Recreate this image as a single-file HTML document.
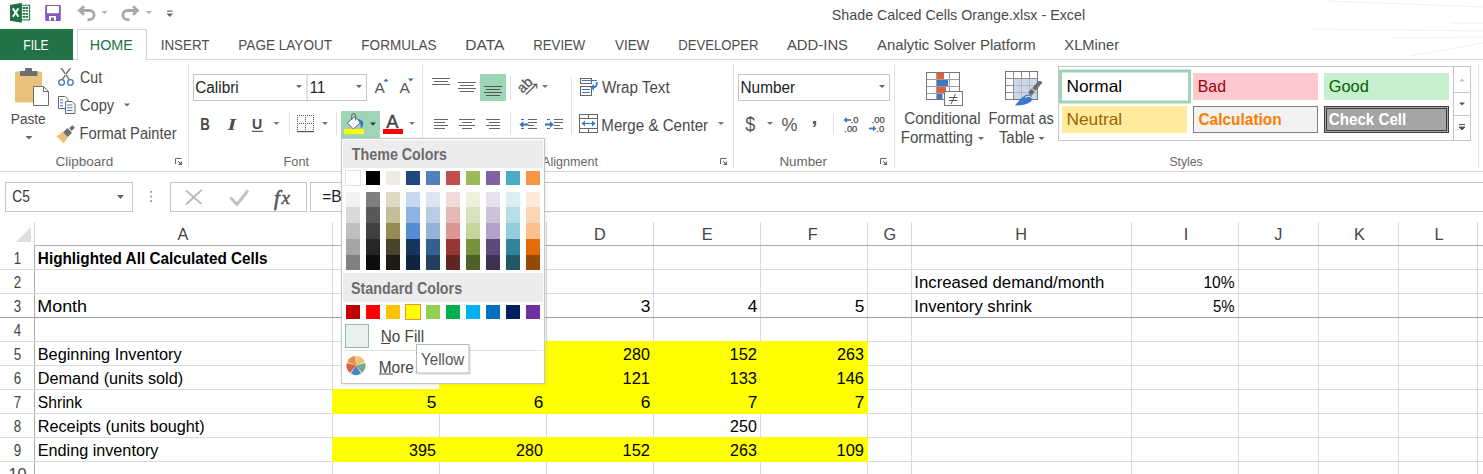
<!DOCTYPE html><html><head><meta charset="utf-8"><style>html,body{margin:0;padding:0;background:#fff;width:1483px;height:474px;overflow:hidden}svg{display:block;font-family:"Liberation Sans",sans-serif}text{font-family:"Liberation Sans",sans-serif}</style></head><body><svg width="1483" height="474" viewBox="0 0 1483 474" font-family="Liberation Sans, sans-serif">
<rect width="1483" height="474" fill="#fff"/>
<g stroke="#f0f0f0" stroke-width="1.2" fill="none"><path d="M1327 1 L1483 7"/><path d="M1313 29 L1483 31"/><path d="M1392 38 L1483 37"/><path d="M1410 56 L1483 43"/><path d="M1450 23 L1483 23"/></g>
<g><rect x="21" y="5.3" width="8.6" height="14.6" fill="#fff" stroke="#1e7145" stroke-width="1"/><path d="M22.6 7h2.4v1.9h-2.4zM25.5 7h2.6v1.9h-2.6zM22.6 10h2.4v1.6h-2.4zM25.5 10h2.6v1.6h-2.6zM22.6 13h2.4v1.8h-2.4zM25.5 13h2.6v1.8h-2.6zM22.6 16h2.4v1.7h-2.4zM25.5 16h2.6v1.7h-2.6z" fill="#1e7145"/><path d="M10 5 L21.8 2.7 L21.8 22.7 L10 20.7 Z" fill="#1e7145"/><path d="M12.8 8.4 L18.5 16.8 M18.4 8.4 L12.8 16.8" stroke="#fff" stroke-width="1.9"/></g>
<g><rect x="45.2" y="5" width="15.6" height="16" rx="1" fill="#8558c0"/><rect x="47" y="6" width="12" height="7.3" rx="0.8" fill="#fff"/><path d="M49 20.5 V16 H56 V20.5 H54 V17.5 H51 V20.5 Z" fill="#fff"/></g>
<g fill="none" stroke="#a8a8a8" stroke-width="2.8"><path d="M80 10.5 H89.5 A4.6 4.6 0 0 1 89.5 19.7 H87.5"/><path d="M84 6.3 L79.5 10.5 L84 14.7"/><path d="M137 10.5 H127.5 A4.6 4.6 0 0 0 127.5 19.7 H129.5"/><path d="M133 6.3 L137.5 10.5 L133 14.7"/></g><path d="M101.5 11h6l-3 3z" fill="#b0b0b0"/><path d="M146 11h6l-3 3z" fill="#b0b0b0"/><rect x="167" y="10.5" width="5.5" height="1.2" fill="#666"/><path d="M166.5 13.5h6.5l-3.25 3.5z" fill="#666"/>
<rect x="0" y="59" width="1483" height="1" fill="#d5d5d5"/>
<rect x="0" y="29" width="73" height="31" fill="#217346"/>
<rect x="77" y="29" width="70" height="31" fill="#ffffff"/>
<path d="M77.5 60 V29.5 H146.5 V60" fill="none" stroke="#d5d5d5" stroke-width="1"/>
<rect x="0" y="171" width="1483" height="1" fill="#d5d5d5"/>
<rect x="188" y="64" width="1" height="104" fill="#e1e1e1"/>
<rect x="422" y="64" width="1" height="104" fill="#e1e1e1"/>
<rect x="733" y="64" width="1" height="104" fill="#e1e1e1"/>
<rect x="894" y="64" width="1" height="104" fill="#e1e1e1"/>
<rect x="1478" y="64" width="1" height="104" fill="#e1e1e1"/>
<path d="M175.5 164 V158.5 H181.5" fill="none" stroke="#666" stroke-width="1"/><path d="M182 161 V165 H178 Z" fill="#666"/><path d="M178 161 L180.5 163.5" stroke="#666" stroke-width="1"/>
<path d="M720.5 164 V158.5 H726.5" fill="none" stroke="#666" stroke-width="1"/><path d="M727 161 V165 H723 Z" fill="#666"/><path d="M723 161 L725.5 163.5" stroke="#666" stroke-width="1"/>
<path d="M880.5 164 V158.5 H886.5" fill="none" stroke="#666" stroke-width="1"/><path d="M887 161 V165 H883 Z" fill="#666"/><path d="M883 161 L885.5 163.5" stroke="#666" stroke-width="1"/>
<g><rect x="15" y="71.5" width="27" height="31" rx="1.5" fill="#e8c27b"/><rect x="20" y="71" width="17.5" height="5" rx="1" fill="#6d6d6d"/><rect x="25" y="68" width="7" height="4" rx="1" fill="#6d6d6d"/><path d="M33.5 86.5 H43.5 L48.5 91.5 V105.5 H33.5 Z" fill="#fff" stroke="#6d6d6d" stroke-width="1"/><path d="M43.5 86.5 V91.5 H48.5" fill="none" stroke="#6d6d6d" stroke-width="1"/></g><path d="M25.5 136h7l-3.5 3.5z" fill="#666"/>
<g><path d="M60.3 68 L62.2 68.3 L69.6 79 L68.4 79.4 Z M71.2 68 L69.3 68.3 L61.9 79 L63.1 79.4 Z" fill="#666"/><circle cx="61.6" cy="82.4" r="2.8" fill="none" stroke="#3c78c3" stroke-width="1.3"/><circle cx="70.4" cy="82.4" r="2.8" fill="none" stroke="#3c78c3" stroke-width="1.3"/></g>
<g fill="#fff" stroke="#666" stroke-width="1"><path d="M58.5 96.5 h6.5 l3 3 v9 h-9.5 z"/><path d="M65.5 101.5 h6.5 l3 3 v9 h-9.5 z"/></g><path d="M60 100h3M60 102.8h3M60 105.7h3M67 105h5.5M67 107.8h5.5M67 110.5h5.5" stroke="#3c78c3" stroke-width="1"/><path d="M124 103.5h6l-3 3z" fill="#666"/>
<g transform="translate(66.5 133.5) rotate(-45)"><path d="M-9 -5 L-1.5 -3.8 L-1.5 3.8 L-9 5 Z" fill="#e8c27b"/><rect x="-1.5" y="-3.3" width="6" height="6.6" fill="#6d6d6d"/><rect x="5.5" y="-1.8" width="4.5" height="3.6" fill="#6d6d6d"/></g>
<rect x="193.5" y="74.5" width="173" height="26" fill="#fff" stroke="#c6c6c6"/><path d="M307 75 V100" stroke="#c6c6c6"/><path d="M296 85h6l-3 3z M356 85h6l-3 3z" fill="#666"/>
<g font-family="Liberation Sans" fill="#555"><text x="374.5" y="93.3" font-size="15.5">A</text><text x="399.5" y="93.3" font-size="15.5">A</text></g><path d="M383.5 81.5 l2.5 -3 l2.5 3z" fill="#2f6eb8"/><path d="M408 78.5 h5.5 l-2.75 3z" fill="#2f6eb8"/>
<g fill="#4a4a4a"><text x="200.3" y="129.9" font-size="17.2" font-weight="700" textLength="9.6" lengthAdjust="spacingAndGlyphs">B</text><text x="227.5" y="129.9" font-size="16.6" font-weight="700" font-style="italic" style="font-family:'Liberation Serif'" textLength="8.8" lengthAdjust="spacingAndGlyphs">I</text><text x="252" y="128.6" font-size="15.2" font-weight="700" textLength="10.2" lengthAdjust="spacingAndGlyphs">U</text></g><rect x="252" y="130.8" width="11" height="1.1" fill="#4a4a4a"/><path d="M273.5 122h6l-3 3z" fill="#777"/><path d="M289.5 112v23 M336.5 112v23" stroke="#e1e1e1"/>
<path d="M297 115h1v1h-1zM297 117h1v1h-1zM297 119h1v1h-1zM297 121h1v1h-1zM297 123h1v1h-1zM297 125h1v1h-1zM297 127h1v1h-1zM297 129h1v1h-1zM299 115h1v1h-1zM299 123h1v1h-1zM301 115h1v1h-1zM301 123h1v1h-1zM303 115h1v1h-1zM303 123h1v1h-1zM305 115h1v1h-1zM305 117h1v1h-1zM305 119h1v1h-1zM305 121h1v1h-1zM305 123h1v1h-1zM305 125h1v1h-1zM305 127h1v1h-1zM305 129h1v1h-1zM307 115h1v1h-1zM307 123h1v1h-1zM309 115h1v1h-1zM309 123h1v1h-1zM311 115h1v1h-1zM311 123h1v1h-1zM313 115h1v1h-1zM313 117h1v1h-1zM313 119h1v1h-1zM313 121h1v1h-1zM313 123h1v1h-1zM313 125h1v1h-1zM313 127h1v1h-1zM313 129h1v1h-1z" fill="#5a5a5a"/>
<rect x="297" y="131" width="17" height="1.2" fill="#555"/><path d="M322 122h6l-3 3z" fill="#777"/>
<rect x="341" y="111" width="39" height="27" fill="#9fd5b7"/>
<g><path d="M347.3 123 L354.8 116.6 L360.5 122.6 L353.4 129 Z" fill="#fff" stroke="#555" stroke-width="0.9"/><path d="M351.7 119.8 V115.5 a1.9 1.9 0 0 1 3.8 0 V120.5" fill="none" stroke="#555" stroke-width="0.9"/><path d="M357.8 119 Q363.8 119.8 363.3 124.3 Q363 127.3 360.6 128.6 Q361.2 124 358.6 121.3 Z" fill="#3c78c3"/></g>
<rect x="344" y="129" width="20" height="5" fill="#ffff00"/>
<path d="M370 122.5h6l-3 3z" fill="#333"/>
<text x="386.3" y="127.8" font-size="18.3" fill="#444" stroke="#444" stroke-width="0.45">A</text>
<rect x="383" y="129" width="20" height="5" fill="#ff0000"/>
<path d="M409 122h6l-3 3z" fill="#777"/>
<path d="M432 78.5h18M434 81.5h14M432 84.5h18" stroke="#666"/>
<path d="M458 82.5h18M460 85.5h14M458 88.5h18M460 91.5h14" stroke="#666"/>
<rect x="480" y="74" width="26" height="27" fill="#9fd5b7"/>
<path d="M484 86.5h18M486 89.5h14M484 92.5h18M486 95.5h14" stroke="#555"/>
<rect x="510" y="76" width="1" height="24" fill="#e1e1e1"/>
<g transform="translate(525.6 85.6) rotate(-45)"><text x="-8" y="3.5" font-size="14" fill="#555" stroke="#555" stroke-width="0.3" textLength="15.5" lengthAdjust="spacingAndGlyphs">ab</text></g><path d="M526 94.5 L536.5 84 M532.5 84.2 h4.3 v4.3" fill="none" stroke="#555" stroke-width="1.1"/><path d="M542 85h6l-3 3z" fill="#777"/>
<rect x="571" y="77" width="1" height="57" fill="#e1e1e1"/>
<path d="M434 119.5h14M434 122.5h11M434 125.5h14M434 128.5h11" stroke="#666"/>
<path d="M459 119.5h16M462 122.5h10M459 125.5h16M462 128.5h10" stroke="#666"/>
<path d="M486 119.5h14M489 122.5h11M486 125.5h14M489 128.5h11" stroke="#666"/>
<rect x="510" y="112" width="1" height="22" fill="#e1e1e1"/>
<path d="M521 119.5h3M528 119.5h9M528 122.5h9M528 125.5h6M521 128.5h3M528 128.5h9" stroke="#666"/><path d="M522 124.5 h6.5" stroke="#3c78c3" stroke-width="2.2"/><path d="M519.3 124.5 l4 -3.3 v6.6z" fill="#3c78c3"/><path d="M547 119.5h3M554 119.5h9M554 122.5h9M554 125.5h6M547 128.5h3M554 128.5h9" stroke="#666"/><path d="M545 124.5 h6.5" stroke="#3c78c3" stroke-width="2.2"/><path d="M554 124.5 l-4 -3.3 v6.6z" fill="#3c78c3"/>
<g fill="none" stroke="#666" stroke-width="1"><rect x="580.5" y="78.5" width="11" height="5"/><rect x="580.5" y="86.5" width="11" height="9"/></g><path d="M582 80.5h15 M582 89.5h8 M582 92.5h8" stroke="#3c78c3" stroke-width="1"/><path d="M596.5 82 q1.5 5 -4 5.5" fill="none" stroke="#3c78c3" stroke-width="1.8"/><path d="M590 87.3 l4 -3.2 v6.4z" fill="#3c78c3"/>
<g fill="none" stroke="#666" stroke-width="1"><rect x="579.5" y="114.5" width="18" height="18"/><path d="M580 118.5h17 M580 128.5h17 M588.5 115v3.5 M588.5 128.5v4"/></g><path d="M583 123.5h11" stroke="#3c78c3" stroke-width="1.2"/><path d="M581.5 123.5l3.5 -3v6z M595.5 123.5l-3.5 -3v6z" fill="#3c78c3"/><path d="M718 122h6l-3 3z" fill="#777"/>
<rect x="738.5" y="74.5" width="151" height="26" fill="#fff" stroke="#c6c6c6"/><path d="M879 85h6l-3 3z" fill="#666"/>
<g fill="#555"><text x="745.2" y="130.5" font-size="19.5" textLength="10" lengthAdjust="spacingAndGlyphs">$</text><text x="781.5" y="131" font-size="19" textLength="16" lengthAdjust="spacingAndGlyphs">%</text><text x="811.5" y="124" font-size="21" font-weight="700">,</text></g><path d="M767 122h6l-3 3z" fill="#777"/><path d="M833.5 113v22" stroke="#e1e1e1"/><g font-size="9.4" fill="#4a4a4a" stroke="#4a4a4a" stroke-width="0.25"><text x="850.6" y="122.7">.0</text><text x="844.3" y="131.6">.00</text><text x="871.6" y="122.7">.00</text><text x="876.3" y="131.6">.0</text></g><path d="M851 120h-5" stroke="#3c78c3" stroke-width="1.8"/><path d="M843.5 120l3.3 -2.9v5.8z" fill="#3c78c3"/><path d="M869 128.5h5" stroke="#3c78c3" stroke-width="1.8"/><path d="M876.3 128.5l-3.3 -2.9v5.8z" fill="#3c78c3"/>
<g><rect x="926.5" y="72.5" width="33" height="27" fill="#fff" stroke="#777"/><path d="M936.5 73v26 M949.5 73v26 M927 79.5h32 M927 86.5h32 M927 93.5h32" stroke="#a0a0a0"/><rect x="937" y="73" width="7" height="6" fill="#e0623a"/><rect x="937" y="80" width="11" height="6" fill="#3c78c3"/><rect x="937" y="87" width="9" height="6" fill="#e0623a"/><rect x="937" y="94" width="5.5" height="5" fill="#3c78c3"/><rect x="944.5" y="91.5" width="18" height="14" fill="#fff" stroke="#777"/><path d="M949 97.5h8.5 M949 100.5h8.5 M955.5 94 L951 104" stroke="#444" stroke-width="0.9" fill="none"/></g><path d="M978 137h6l-3 3z" fill="#666"/>
<g><rect x="1005.5" y="71.5" width="32" height="28" fill="#fff" stroke="#777"/><rect x="1014" y="78" width="23" height="21" fill="#c5d9f1"/><path d="M1013.5 72v27 M1021.5 72v6 M1029.5 72v6 M1006 78.5h31 M1006 85.5h8 M1006 92.5h8" stroke="#909090"/><path d="M1021.5 79v20 M1029.5 79v20 M1014 85.5h23 M1014 92.5h23" stroke="#c9a88f" stroke-width="0.8"/><g transform="translate(1033 90.5) rotate(-50)"><path d="M1.3 -2.1 H10.5 L12.5 0 L12 2.1 H1.3 Z" fill="#6d6d6d"/><rect x="-5" y="-2.3" width="5.2" height="4.6" fill="#6d6d6d"/></g><path d="M1030.5 95 Q1034 98 1031 101.5 Q1026 105.5 1015 105.5 Q1019 100 1023.5 96.5 Q1027 93.5 1030.5 95 Z" fill="#3c78c3"/><path d="M1025 97.5 Q1030 94.5 1032 98.5" stroke="#fff" stroke-width="1" fill="none"/></g><path d="M1038.5 137h6l-3 3z" fill="#666"/>
<rect x="1058.5" y="66.5" width="412" height="74" fill="#fff" stroke="#c6c6c6"/><rect x="1060.5" y="71" width="129" height="31" fill="#fff" stroke="#9fd5b7" stroke-width="3"/><rect x="1193" y="73" width="125" height="27" fill="#ffc7ce"/><rect x="1324" y="73" width="125" height="27" fill="#c6efce"/><rect x="1062" y="106" width="125" height="27" fill="#ffeb9c"/><rect x="1193.5" y="106.5" width="124" height="26" fill="#f2f2f2" stroke="#7f7f7f"/><rect x="1324.5" y="106.5" width="124" height="26" fill="#a5a5a5" stroke="#3f3f3f"/><rect x="1326.5" y="108.5" width="120" height="22" fill="none" stroke="#3f3f3f"/><path d="M1453.5 67v73 M1454 92.5h16 M1454 115.5h16" stroke="#c6c6c6"/><path d="M1459 81.5h6l-3 -3z" fill="#c6c6c6"/><path d="M1459 102.5h6l-3 3z" fill="#555"/><path d="M1459 124.5h6 M1459 127h6l-3 3z" stroke="#555" fill="#555"/>
<rect x="5.5" y="182.5" width="127" height="29" fill="#fff" stroke="#c6c6c6"/><path d="M117 195h7l-3.5 4z" fill="#666"/><path d="M151.2 191v1.8 M151.2 195.8v1.8 M151.2 200.2v1.8" stroke="#8a8a8a" stroke-width="1.8"/><rect x="170.5" y="182.5" width="136" height="29" fill="#fff" stroke="#c6c6c6"/><path d="M186 190.5 L201.5 204 M201.5 190 L186 204.5" stroke="#bababa" stroke-width="1.9"/><path d="M230.5 197.5 L237 204.5 L248 190.5" fill="none" stroke="#c2c2c2" stroke-width="3"/><text x="274" y="204.5" style="font-family:'Liberation Serif'" font-style="italic" font-size="21" fill="#555" stroke="#555" stroke-width="0.6">f</text><text x="281.5" y="204" style="font-family:'Liberation Serif'" font-style="italic" font-size="19" fill="#555" stroke="#555" stroke-width="0.5">x</text><rect x="310.5" y="182.5" width="1180" height="29" fill="#fff" stroke="#c6c6c6"/>
<path d="M16 242 L31 227 L31 242z" fill="#dfdfdf"/>
<rect x="34" y="222" width="1" height="252" fill="#d9d9d9"/>
<rect x="332" y="222" width="1" height="252" fill="#d9d9d9"/>
<rect x="439" y="222" width="1" height="252" fill="#d9d9d9"/>
<rect x="546" y="222" width="1" height="252" fill="#d9d9d9"/>
<rect x="653" y="222" width="1" height="252" fill="#d9d9d9"/>
<rect x="760" y="222" width="1" height="252" fill="#d9d9d9"/>
<rect x="867" y="222" width="1" height="252" fill="#d9d9d9"/>
<rect x="911" y="222" width="1" height="252" fill="#d9d9d9"/>
<rect x="1131" y="222" width="1" height="252" fill="#d9d9d9"/>
<rect x="1238" y="222" width="1" height="252" fill="#d9d9d9"/>
<rect x="1318" y="222" width="1" height="252" fill="#d9d9d9"/>
<rect x="1398" y="222" width="1" height="252" fill="#d9d9d9"/>
<rect x="1477" y="222" width="1" height="252" fill="#d9d9d9"/>
<rect x="34" y="245" width="1" height="229" fill="#ababab"/>
<rect x="0" y="269" width="1483" height="1" fill="#d9d9d9"/>
<rect x="0" y="293" width="1483" height="1" fill="#d9d9d9"/>
<rect x="0" y="317" width="1483" height="1" fill="#d9d9d9"/>
<rect x="0" y="341" width="1483" height="1" fill="#d9d9d9"/>
<rect x="0" y="365" width="1483" height="1" fill="#d9d9d9"/>
<rect x="0" y="389" width="1483" height="1" fill="#d9d9d9"/>
<rect x="0" y="413" width="1483" height="1" fill="#d9d9d9"/>
<rect x="0" y="437" width="1483" height="1" fill="#d9d9d9"/>
<rect x="0" y="461" width="1483" height="1" fill="#d9d9d9"/>
<rect x="0" y="485" width="1483" height="1" fill="#d9d9d9"/>
<rect x="34" y="245" width="1449" height="1" fill="#ababab"/>
<rect x="0" y="317" width="1483" height="1" fill="#a0a0a0"/>
<rect x="439" y="341" width="429" height="48" fill="#ffff00"/>
<rect x="332" y="389" width="536" height="25" fill="#ffff00"/>
<rect x="332" y="437" width="536" height="25" fill="#ffff00"/>
<text x="831.79" y="20" font-size="15.41" fill="#4a4a4a" textLength="253.28" lengthAdjust="spacingAndGlyphs">Shade Calced Cells Orange.xlsx - Excel</text>
<text x="23.33" y="50" font-size="14.83" fill="#ffffff" textLength="25.26" lengthAdjust="spacingAndGlyphs">FILE</text>
<text x="89.85" y="50" font-size="14.83" fill="#217346" textLength="42.92" lengthAdjust="spacingAndGlyphs">HOME</text>
<text x="160.69" y="50" font-size="14.83" fill="#4d4d4d" textLength="48.77" lengthAdjust="spacingAndGlyphs">INSERT</text>
<text x="238.33" y="50" font-size="14.83" fill="#4d4d4d" textLength="93.73" lengthAdjust="spacingAndGlyphs">PAGE LAYOUT</text>
<text x="361.33" y="50" font-size="14.83" fill="#4d4d4d" textLength="75.25" lengthAdjust="spacingAndGlyphs">FORMULAS</text>
<text x="465.33" y="50" font-size="14.83" fill="#4d4d4d" textLength="39.12" lengthAdjust="spacingAndGlyphs">DATA</text>
<text x="533.33" y="50" font-size="14.83" fill="#4d4d4d" textLength="51.94" lengthAdjust="spacingAndGlyphs">REVIEW</text>
<text x="614.93" y="50" font-size="14.83" fill="#4d4d4d" textLength="34.41" lengthAdjust="spacingAndGlyphs">VIEW</text>
<text x="678.33" y="50" font-size="14.83" fill="#4d4d4d" textLength="80.18" lengthAdjust="spacingAndGlyphs">DEVELOPER</text>
<text x="786.93" y="50" font-size="14.83" fill="#4d4d4d" textLength="61.11" lengthAdjust="spacingAndGlyphs">ADD-INS</text>
<text x="876.93" y="50" font-size="14.83" fill="#4d4d4d" textLength="158.73" lengthAdjust="spacingAndGlyphs">Analytic Solver Platform</text>
<text x="1064.33" y="50" font-size="14.83" fill="#4d4d4d" textLength="54.73" lengthAdjust="spacingAndGlyphs">XLMiner</text>
<text x="10.85" y="123.6" font-size="14.83" fill="#4a4a4a" textLength="34.79" lengthAdjust="spacingAndGlyphs">Paste</text>
<text x="80.09" y="83" font-size="15.84" fill="#4a4a4a" textLength="22.08" lengthAdjust="spacingAndGlyphs">Cut</text>
<text x="80.09" y="111" font-size="15.84" fill="#4a4a4a" textLength="34.05" lengthAdjust="spacingAndGlyphs">Copy</text>
<text x="79.49" y="139" font-size="15.84" fill="#4a4a4a" textLength="97.16" lengthAdjust="spacingAndGlyphs">Format Painter</text>
<text x="55.52" y="166" font-size="13.23" fill="#666666" textLength="57.62" lengthAdjust="spacingAndGlyphs">Clipboard</text>
<text x="195.29" y="93" font-size="15.84" fill="#222" textLength="43.43" lengthAdjust="spacingAndGlyphs">Calibri</text>
<text x="309.81" y="93" font-size="15.84" fill="#222" textLength="15.35" lengthAdjust="spacingAndGlyphs">11</text>
<text x="283.60" y="166" font-size="13.23" fill="#666666" textLength="25.46" lengthAdjust="spacingAndGlyphs">Font</text>
<text x="601.89" y="93" font-size="15.84" fill="#4a4a4a" textLength="67.78" lengthAdjust="spacingAndGlyphs">Wrap Text</text>
<text x="601.29" y="130.5" font-size="15.84" fill="#4a4a4a" textLength="106.82" lengthAdjust="spacingAndGlyphs">Merge &amp; Center</text>
<text x="542.00" y="166" font-size="13.23" fill="#666666" textLength="56.01" lengthAdjust="spacingAndGlyphs">Alignment</text>
<text x="740.49" y="93" font-size="15.84" fill="#222" textLength="54.70" lengthAdjust="spacingAndGlyphs">Number</text>
<text x="779.40" y="166" font-size="13.23" fill="#666666" textLength="47.64" lengthAdjust="spacingAndGlyphs">Number</text>
<text x="904.25" y="123.8" font-size="15.84" fill="#4a4a4a" textLength="76.48" lengthAdjust="spacingAndGlyphs">Conditional</text>
<text x="900.65" y="143" font-size="15.84" fill="#4a4a4a" textLength="72.29" lengthAdjust="spacingAndGlyphs">Formatting</text>
<text x="988.49" y="123.8" font-size="15.84" fill="#4a4a4a" textLength="65.33" lengthAdjust="spacingAndGlyphs">Format as</text>
<text x="998.89" y="143" font-size="15.84" fill="#4a4a4a" textLength="35.82" lengthAdjust="spacingAndGlyphs">Table</text>
<text x="1066.47" y="92" font-size="16.28" fill="#000000" textLength="55.65" lengthAdjust="spacingAndGlyphs">Normal</text>
<text x="1197.79" y="92" font-size="16.28" fill="#9c0006" textLength="28.17" lengthAdjust="spacingAndGlyphs">Bad</text>
<text x="1328.75" y="92" font-size="16.28" fill="#006100" textLength="40.07" lengthAdjust="spacingAndGlyphs">Good</text>
<text x="1066.47" y="125" font-size="16.28" fill="#9c6500" textLength="55.65" lengthAdjust="spacingAndGlyphs">Neutral</text>
<text x="1198.39" y="124.8" font-size="16.28" fill="#fa7d00" font-weight="700" textLength="83.35" lengthAdjust="spacingAndGlyphs">Calculation</text>
<text x="1328.75" y="124.8" font-size="16.28" fill="#ffffff" font-weight="700" textLength="77.51" lengthAdjust="spacingAndGlyphs">Check Cell</text>
<text x="1169.40" y="166" font-size="13.23" fill="#666666" textLength="33.26" lengthAdjust="spacingAndGlyphs">Styles</text>
<text x="12.25" y="202.4" font-size="15.70" fill="#333" textLength="17.55" lengthAdjust="spacingAndGlyphs">C5</text>
<text x="322.29" y="202.4" font-size="15.70" fill="#222" textLength="19.41" lengthAdjust="spacingAndGlyphs">=B</text>
<text x="183.02" y="240.2" font-size="16.28" fill="#444" text-anchor="middle">A</text>
<text x="599.86" y="240.2" font-size="16.28" fill="#444" text-anchor="middle">D</text>
<text x="707.20" y="240.2" font-size="16.28" fill="#444" text-anchor="middle">E</text>
<text x="812.82" y="240.2" font-size="16.28" fill="#444" text-anchor="middle">F</text>
<text x="889.90" y="240.2" font-size="16.28" fill="#444" text-anchor="middle">G</text>
<text x="1021.00" y="240.2" font-size="16.28" fill="#444" text-anchor="middle">H</text>
<text x="1186.00" y="240.2" font-size="16.28" fill="#444" text-anchor="middle">I</text>
<text x="1278.32" y="240.2" font-size="16.28" fill="#444" text-anchor="middle">J</text>
<text x="1359.46" y="240.2" font-size="16.28" fill="#444" text-anchor="middle">K</text>
<text x="1438.96" y="240.2" font-size="16.28" fill="#444" text-anchor="middle">L</text>
<text x="13.80" y="264" font-size="16.28" fill="#444" textLength="7.4" lengthAdjust="spacingAndGlyphs">1</text>
<text x="13.80" y="288" font-size="16.28" fill="#444" textLength="7.4" lengthAdjust="spacingAndGlyphs">2</text>
<text x="13.80" y="312" font-size="16.28" fill="#444" textLength="7.4" lengthAdjust="spacingAndGlyphs">3</text>
<text x="13.80" y="336" font-size="16.28" fill="#444" textLength="7.4" lengthAdjust="spacingAndGlyphs">4</text>
<text x="13.80" y="360" font-size="16.28" fill="#444" textLength="7.4" lengthAdjust="spacingAndGlyphs">5</text>
<text x="13.80" y="384" font-size="16.28" fill="#444" textLength="7.4" lengthAdjust="spacingAndGlyphs">6</text>
<text x="13.80" y="408" font-size="16.28" fill="#444" textLength="7.4" lengthAdjust="spacingAndGlyphs">7</text>
<text x="13.80" y="432" font-size="16.28" fill="#444" textLength="7.4" lengthAdjust="spacingAndGlyphs">8</text>
<text x="13.80" y="456" font-size="16.28" fill="#444" textLength="7.4" lengthAdjust="spacingAndGlyphs">9</text>
<text x="17.5" y="480" font-size="16.28" fill="#444" text-anchor="middle">10</text>
<text x="37.86" y="264" font-size="17.30" fill="#000" font-weight="700" textLength="229.68" lengthAdjust="spacingAndGlyphs">Highlighted All Calculated Cells</text>
<text x="37.26" y="312" font-size="17.30" fill="#000" textLength="49.78" lengthAdjust="spacingAndGlyphs">Month</text>
<text x="37.74" y="360" font-size="17.30" fill="#000" textLength="143.95" lengthAdjust="spacingAndGlyphs">Beginning Inventory</text>
<text x="37.74" y="384" font-size="17.30" fill="#000" textLength="145.37" lengthAdjust="spacingAndGlyphs">Demand (units sold)</text>
<text x="37.74" y="408" font-size="17.30" fill="#000" textLength="44.45" lengthAdjust="spacingAndGlyphs">Shrink</text>
<text x="37.74" y="432" font-size="17.30" fill="#000" textLength="167.04" lengthAdjust="spacingAndGlyphs">Receipts (units bought)</text>
<text x="37.74" y="456" font-size="17.30" fill="#000" textLength="120.64" lengthAdjust="spacingAndGlyphs">Ending inventory</text>
<text x="914.30" y="288" font-size="17.30" fill="#000" textLength="190.01" lengthAdjust="spacingAndGlyphs">Increased demand/month</text>
<text x="914.30" y="312" font-size="17.30" fill="#000" textLength="117.41" lengthAdjust="spacingAndGlyphs">Inventory shrink</text>
<text x="1203.42" y="288" font-size="17.30" fill="#000" textLength="31.15" lengthAdjust="spacingAndGlyphs">10%</text>
<text x="1213.02" y="312" font-size="17.30" fill="#000" textLength="21.60" lengthAdjust="spacingAndGlyphs">5%</text>
<text x="431.36" y="312" font-size="17.30" fill="#000" text-anchor="middle">1</text>
<text x="538.66" y="312" font-size="17.30" fill="#000" text-anchor="middle">2</text>
<text x="645.66" y="312" font-size="17.30" fill="#000" text-anchor="middle">3</text>
<text x="752.66" y="312" font-size="17.30" fill="#000" text-anchor="middle">4</text>
<text x="859.66" y="312" font-size="17.30" fill="#000" text-anchor="middle">5</text>
<text x="623.10" y="360" font-size="17.30" fill="#000" textLength="26.72" lengthAdjust="spacingAndGlyphs">280</text>
<text x="729.50" y="360" font-size="17.30" fill="#000" textLength="27.43" lengthAdjust="spacingAndGlyphs">152</text>
<text x="837.10" y="360" font-size="17.30" fill="#000" textLength="26.72" lengthAdjust="spacingAndGlyphs">263</text>
<text x="622.50" y="384" font-size="17.30" fill="#000" textLength="27.43" lengthAdjust="spacingAndGlyphs">121</text>
<text x="729.50" y="384" font-size="17.30" fill="#000" textLength="27.43" lengthAdjust="spacingAndGlyphs">133</text>
<text x="836.50" y="384" font-size="17.30" fill="#000" textLength="27.43" lengthAdjust="spacingAndGlyphs">146</text>
<text x="431.66" y="408" font-size="17.30" fill="#000" text-anchor="middle">5</text>
<text x="538.66" y="408" font-size="17.30" fill="#000" text-anchor="middle">6</text>
<text x="645.66" y="408" font-size="17.30" fill="#000" text-anchor="middle">6</text>
<text x="752.66" y="408" font-size="17.30" fill="#000" text-anchor="middle">7</text>
<text x="859.66" y="408" font-size="17.30" fill="#000" text-anchor="middle">7</text>
<text x="730.10" y="432" font-size="17.30" fill="#000" textLength="26.72" lengthAdjust="spacingAndGlyphs">250</text>
<text x="409.10" y="456" font-size="17.30" fill="#000" textLength="26.76" lengthAdjust="spacingAndGlyphs">395</text>
<text x="516.10" y="456" font-size="17.30" fill="#000" textLength="26.72" lengthAdjust="spacingAndGlyphs">280</text>
<text x="622.50" y="456" font-size="17.30" fill="#000" textLength="27.43" lengthAdjust="spacingAndGlyphs">152</text>
<text x="730.10" y="456" font-size="17.30" fill="#000" textLength="26.72" lengthAdjust="spacingAndGlyphs">263</text>
<text x="836.50" y="456" font-size="17.30" fill="#000" textLength="27.43" lengthAdjust="spacingAndGlyphs">109</text>
<rect x="340" y="137" width="208" height="250" fill="#000" opacity="0.025" rx="3"/>
<rect x="341" y="138" width="205" height="247" fill="#000" opacity="0.03" rx="2"/>
<rect x="341.5" y="138.5" width="203" height="245" fill="#fff" stroke="#c6c6c6"/>
<rect x="343" y="140" width="200" height="28" fill="#ececec"/>
<rect x="343" y="273" width="200" height="29" fill="#ececec"/>
<rect x="345.5" y="170.5" width="15" height="15" fill="#FFFFFF" stroke="#e2e2e2" stroke-width="1"/>
<rect x="346" y="192" width="14" height="15" fill="#F2F2F2"/>
<rect x="346" y="207" width="14" height="16" fill="#D9D9D9"/>
<rect x="346" y="223" width="14" height="16" fill="#BFBFBF"/>
<rect x="346" y="239" width="14" height="16" fill="#A6A6A6"/>
<rect x="346" y="255" width="14" height="15" fill="#808080"/>
<rect x="346" y="305" width="14" height="14" fill="#C00000"/>
<rect x="366" y="171" width="14" height="14" fill="#000000"/>
<rect x="366" y="192" width="14" height="15" fill="#7F7F7F"/>
<rect x="366" y="207" width="14" height="16" fill="#595959"/>
<rect x="366" y="223" width="14" height="16" fill="#404040"/>
<rect x="366" y="239" width="14" height="16" fill="#262626"/>
<rect x="366" y="255" width="14" height="15" fill="#0D0D0D"/>
<rect x="366" y="305" width="14" height="14" fill="#FF0000"/>
<rect x="386" y="171" width="14" height="14" fill="#EEECE1"/>
<rect x="386" y="192" width="14" height="15" fill="#DDD9C3"/>
<rect x="386" y="207" width="14" height="16" fill="#C4BD97"/>
<rect x="386" y="223" width="14" height="16" fill="#948A54"/>
<rect x="386" y="239" width="14" height="16" fill="#4A452A"/>
<rect x="386" y="255" width="14" height="15" fill="#1D1B10"/>
<rect x="386" y="305" width="14" height="14" fill="#FFC000"/>
<rect x="406" y="171" width="14" height="14" fill="#1F497D"/>
<rect x="406" y="192" width="14" height="15" fill="#C6D9F0"/>
<rect x="406" y="207" width="14" height="16" fill="#8DB3E2"/>
<rect x="406" y="223" width="14" height="16" fill="#548DD4"/>
<rect x="406" y="239" width="14" height="16" fill="#17365D"/>
<rect x="406" y="255" width="14" height="15" fill="#0F243E"/>
<rect x="406" y="305" width="14" height="14" fill="#FFFF00"/>
<rect x="426" y="171" width="14" height="14" fill="#4F81BD"/>
<rect x="426" y="192" width="14" height="15" fill="#DBE5F1"/>
<rect x="426" y="207" width="14" height="16" fill="#B8CCE4"/>
<rect x="426" y="223" width="14" height="16" fill="#95B3D7"/>
<rect x="426" y="239" width="14" height="16" fill="#366092"/>
<rect x="426" y="255" width="14" height="15" fill="#244061"/>
<rect x="426" y="305" width="14" height="14" fill="#92D050"/>
<rect x="446" y="171" width="14" height="14" fill="#C0504D"/>
<rect x="446" y="192" width="14" height="15" fill="#F2DCDB"/>
<rect x="446" y="207" width="14" height="16" fill="#E6B9B8"/>
<rect x="446" y="223" width="14" height="16" fill="#D99694"/>
<rect x="446" y="239" width="14" height="16" fill="#953734"/>
<rect x="446" y="255" width="14" height="15" fill="#632423"/>
<rect x="446" y="305" width="14" height="14" fill="#00B050"/>
<rect x="466" y="171" width="14" height="14" fill="#9BBB59"/>
<rect x="466" y="192" width="14" height="15" fill="#EBF1DD"/>
<rect x="466" y="207" width="14" height="16" fill="#D7E3BC"/>
<rect x="466" y="223" width="14" height="16" fill="#C3D69B"/>
<rect x="466" y="239" width="14" height="16" fill="#76923C"/>
<rect x="466" y="255" width="14" height="15" fill="#4F6128"/>
<rect x="466" y="305" width="14" height="14" fill="#00B0F0"/>
<rect x="486" y="171" width="14" height="14" fill="#8064A2"/>
<rect x="486" y="192" width="14" height="15" fill="#E5E0EC"/>
<rect x="486" y="207" width="14" height="16" fill="#CCC1D9"/>
<rect x="486" y="223" width="14" height="16" fill="#B2A2C7"/>
<rect x="486" y="239" width="14" height="16" fill="#5F497A"/>
<rect x="486" y="255" width="14" height="15" fill="#3F3151"/>
<rect x="486" y="305" width="14" height="14" fill="#0070C0"/>
<rect x="506" y="171" width="14" height="14" fill="#4BACC6"/>
<rect x="506" y="192" width="14" height="15" fill="#DBEEF3"/>
<rect x="506" y="207" width="14" height="16" fill="#B7DDE8"/>
<rect x="506" y="223" width="14" height="16" fill="#92CDDC"/>
<rect x="506" y="239" width="14" height="16" fill="#31859B"/>
<rect x="506" y="255" width="14" height="15" fill="#205867"/>
<rect x="506" y="305" width="14" height="14" fill="#002060"/>
<rect x="526" y="171" width="14" height="14" fill="#F79646"/>
<rect x="526" y="192" width="14" height="15" fill="#FDEADA"/>
<rect x="526" y="207" width="14" height="16" fill="#FBD5B5"/>
<rect x="526" y="223" width="14" height="16" fill="#FAC08F"/>
<rect x="526" y="239" width="14" height="16" fill="#E36C09"/>
<rect x="526" y="255" width="14" height="15" fill="#974806"/>
<rect x="526" y="305" width="14" height="14" fill="#7030A0"/>
<rect x="405.5" y="304.5" width="15" height="15" fill="none" stroke="#f29436" stroke-width="1"/>
<rect x="345.5" y="324.5" width="23" height="23" fill="#e8f2ec" stroke="#86c29d"/>
<rect x="381" y="343" width="9" height="1" fill="#444"/>
<rect x="343" y="350" width="200" height="1" fill="#e2e2e2"/>
<path d="M356 365.5 L356.50 356.01 A9.5 9.5 0 0 1 364.87 362.10 Z" fill="#e8c27b"/>
<path d="M356 365.5 L365.18 363.04 A9.5 9.5 0 0 1 361.98 372.88 Z" fill="#7aa88d"/>
<path d="M356 365.5 L361.17 373.47 A9.5 9.5 0 0 1 350.83 373.47 Z" fill="#4a85c8"/>
<path d="M356 365.5 L350.02 372.88 A9.5 9.5 0 0 1 346.82 363.04 Z" fill="#d9603a"/>
<path d="M356 365.5 L347.13 362.10 A9.5 9.5 0 0 1 355.50 356.01 Z" fill="#e8904a"/>
<rect x="379" y="373.5" width="14" height="1" fill="#444"/>
<rect x="417" y="345" width="54" height="30" fill="#000" opacity="0.08"/>
<rect x="416.5" y="344.5" width="52.5" height="28.5" fill="#fff" stroke="#b8b8b8"/>
<text x="351.85" y="160" font-size="15.70" fill="#6b6b6b" font-weight="700" textLength="95.10" lengthAdjust="spacingAndGlyphs">Theme Colors</text>
<text x="351.09" y="294" font-size="15.70" fill="#6b6b6b" font-weight="700" textLength="110.99" lengthAdjust="spacingAndGlyphs">Standard Colors</text>
<text x="380.77" y="342" font-size="15.70" fill="#444" textLength="43.35" lengthAdjust="spacingAndGlyphs">No Fill</text>
<text x="378.77" y="372.5" font-size="15.70" fill="#444" textLength="35.17" lengthAdjust="spacingAndGlyphs">More</text>
<text x="421.09" y="365" font-size="15.70" fill="#575757" textLength="43.14" lengthAdjust="spacingAndGlyphs">Yellow</text>
</svg></body></html>
